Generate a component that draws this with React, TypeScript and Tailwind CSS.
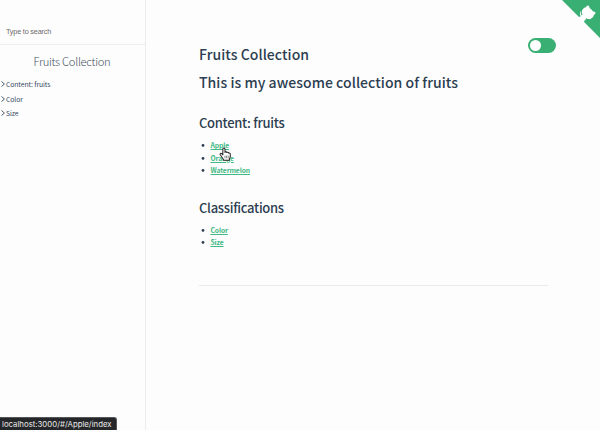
import React from "react";

const categories = ["Content: fruits", "Color", "Size"];

function GithubCorner() {
  return (
    <a href="#" aria-label="View source on Github" className="absolute top-0 right-0 block">
      <svg viewBox="0 0 250 250" className="block size-[38px] fill-[#3aaf73] text-white">
        <path d="M0,0 L115,115 L130,115 L142,142 L250,250 L250,0 Z" />
        <path
          d="M128.3,109.0 C113.8,99.7 119.0,89.6 119.0,89.6 C122.0,82.7 120.5,78.6 120.5,78.6 C119.2,72.0 123.4,76.3 123.4,76.3 C127.3,80.9 125.5,87.3 125.5,87.3 C122.9,97.6 130.6,101.9 134.4,103.2"
          fill="currentColor"
        />
        <path
          d="M115.0,115.0 C114.9,115.1 118.7,116.5 119.8,115.4 L133.7,101.6 C136.9,99.2 139.9,98.4 142.2,98.6 C133.8,88.0 127.5,74.4 143.8,58.0 C148.5,53.4 154.0,51.2 159.7,51.0 C160.3,49.4 163.2,43.6 171.4,40.1 C171.4,40.1 176.1,42.5 178.8,56.2 C183.1,58.6 187.2,61.8 190.9,65.4 C194.5,69.0 197.7,73.2 200.1,77.6 C213.8,80.2 216.3,84.9 216.3,84.9 C212.7,93.1 206.9,96.0 205.4,96.6 C205.1,102.4 203.0,107.8 198.3,112.5 C181.9,128.9 168.3,122.5 157.7,114.1 C157.9,116.9 156.7,120.9 152.7,124.9 L141.0,136.5 C139.8,137.7 141.6,141.9 141.8,141.8 Z"
          fill="currentColor"
          stroke="currentColor"
          strokeWidth="8"
        />
      </svg>
    </a>
  );
}

function HandCursor() {
  return (
    <svg viewBox="0 0 22 26" className="absolute top-[147px] left-[219px] h-[14px] w-[12px]">
      <path
        d="M7 14.500V4a2 2 0 0 1 4 0v6c.3-1.600 3.300-1.600 3.600.4.700-1.300 3.200-1 3.400 1 1-.7 2.800 0 2.800 1.800v4.300c0 2.500-1.800 3.800-1.800 7H8.500c0-2.500-4-6-6.300-10-1.200-2.200 1.200-3.800 2.800-2.200z"
        fill="white"
        stroke="#222"
        strokeWidth="1.9"
        strokeLinejoin="round"
      />
      <path d="M11 16v5M14 16v5M17 16v5" stroke="#444" strokeWidth="1.2" />
    </svg>
  );
}

function LinkList({ items }: { items: string[] }) {
  return (
    <ul className="mt-[6px]">
      {items.map((item) => (
        <li key={item} className="flex h-[12.4px] items-center">
          <svg viewBox="0 0 4 4" className="mr-[5.500px] ml-[2px] size-[4px]">
            <circle cx="2" cy="2.4" r="1.4" fill="#2c3e50" />
          </svg>
          <a
            href="#"
            className="text-[6.800px] leading-[12px] font-semibold tracking-[-0.14px] text-[#42b983] underline decoration-1 underline-offset-1"
          >
            {item}
          </a>
        </li>
      ))}
    </ul>
  );
}

export default function App() {
  return (
    <div className="relative flex h-[430px] w-[600px] overflow-hidden bg-[#fefdfe] font-['Noto_Sans_CJK_SC',sans-serif] text-[#2c3e50]">
      <aside className="w-[146px] shrink-0 border-r border-[#ececee]">
        <div className="flex h-[45px] items-end border-b border-[#eeeef0] pb-[6px] pl-[6px]">
          <span className="font-['Liberation_Sans',sans-serif] text-[7.300px] leading-[12px] tracking-[-0.2px] text-[#6c6c6c]">
            Type to search
          </span>
        </div>
        <h1 className="mt-[8px] pr-[1px] text-center text-[11.200px] leading-[16px] font-light tracking-[-0.28px] text-[#45525f]">
          Fruits Collection
        </h1>
        <ul className="mt-[8px]">
          {categories.map((name) => (
            <li
              key={name}
              className="flex h-[14.400px] items-center text-[6.800px] leading-[14px] tracking-[-0.08px] text-[#34495e]"
            >
              <svg viewBox="0 0 4 6" className="mr-[1px] ml-[1px] h-[6px] w-[4px]">
                <path d="M.5 .5 3.400 3 .5 5.500" fill="none" stroke="#34495e" strokeWidth=".9" />
              </svg>
              {name}
            </li>
          ))}
        </ul>
      </aside>

      <main className="w-[402px] pt-[44px] pl-[53px]">
        <h1 className="text-[14px] leading-[20px] font-medium tracking-[0.05px] whitespace-nowrap">
          Fruits Collection
        </h1>
        <h1 className="mt-[8px] text-[14px] leading-[20px] font-medium tracking-[0.05px] whitespace-nowrap">
          This is my awesome collection of fruits
        </h1>
        <h2 className="mt-[21px] text-[13px] leading-[20px] font-medium tracking-[-0.3px]">Content: fruits</h2>
        <LinkList items={["Apple", "Orange", "Watermelon"]} />
        <h2 className="mt-[21.500px] text-[13px] leading-[20px] font-medium tracking-[-0.3px]">Classifications</h2>
        <LinkList items={["Color", "Size"]} />
        <hr className="mt-[36.500px] border-[#e9ebea]" />
      </main>

      <button
        aria-label="Toggle theme"
        className="absolute top-[38px] left-[528px] flex h-[15px] w-[28px] items-center rounded-full bg-[#3aaf73] pl-[2px]"
      >
        <span className="size-[11px] rounded-full bg-white" />
      </button>
      <GithubCorner />
      <HandCursor />
      <div className="absolute bottom-0 left-0 flex h-[13px] w-[117px] items-center rounded-tr-[3px] border-t border-r border-[#55565a] bg-[#252629] pt-[1px] pl-[2px] font-[Inter,sans-serif] text-[7.800px] text-[#e8e8e8]">
        localhost:3000/#/Apple/index
      </div>
    </div>
  );
}
